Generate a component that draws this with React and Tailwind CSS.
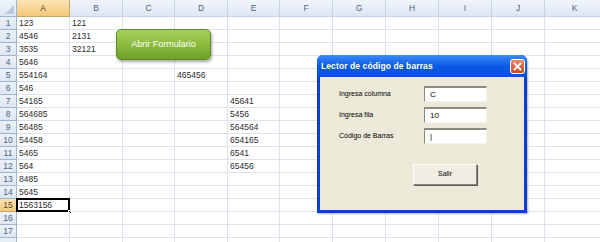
import React from "react";

const COLS = [
  ["A", 53],
  ["B", 53],
  ["C", 52],
  ["D", 53],
  ["E", 52],
  ["F", 53],
  ["G", 53],
  ["H", 53],
  ["I", 53],
  ["J", 53],
  ["K", 60],
];

const DATA = {
  1: { A: "123", B: "121" },
  2: { A: "4546", B: "2131" },
  3: { A: "3535", B: "32121" },
  4: { A: "5646" },
  5: { A: "554164", D: "465456" },
  6: { A: "546" },
  7: { A: "54165", E: "45641" },
  8: { A: "564685", E: "5456" },
  9: { A: "56485", E: "564564" },
  10: { A: "54458", E: "654165" },
  11: { A: "5465", E: "6541" },
  12: { A: "564", E: "65456" },
  13: { A: "8485" },
  14: { A: "5645" },
  15: { A: "1563156" },
  16: {},
  17: {},
  18: {},
};

function HeaderRow() {
  return (
    <div className="flex h-[17px] shrink-0">
      <div className="w-[17px] shrink-0 h-full border-r border-b border-[#9eb6ce] bg-gradient-to-b from-[#eef3fa] to-[#dde7f4] relative">
        <div className="absolute right-[2px] bottom-[2px] w-0 h-0 border-l-[9px] border-l-transparent border-b-[9px] border-b-[#b6c8dd]" />
      </div>
      {COLS.map(([c, w]) => (
        <div
          key={c}
          style={{ width: w }}
          className={
            "shrink-0 h-full flex items-center justify-center text-[8.5px] border-r border-b " +
            (c === "A"
              ? "bg-gradient-to-b from-[#fbe3b4] to-[#f5c778] border-[#c4a86b] text-[#5b4a2a]"
              : "bg-gradient-to-b from-[#f1f5fb] to-[#dce6f4] border-[#c5d3e4] text-[#4f6480]")
          }
        >
          {c}
        </div>
      ))}
    </div>
  );
}

function Row({ n }) {
  const d = DATA[n] || {};
  const sel = n === 15;
  return (
    <div className="flex h-[13px] shrink-0">
      <div
        className={
          "w-[17px] shrink-0 h-full flex items-center justify-center text-[8.5px] border-r border-b " +
          (sel
            ? "bg-gradient-to-b from-[#fbe3b4] to-[#f5c778] border-[#c4a86b] text-[#5b4a2a]"
            : "bg-gradient-to-b from-[#ecf1f8] to-[#dde7f4] border-[#9eb6ce] text-[#4f6480]")
        }
      >
        {n <= 17 ? n : ""}
      </div>
      {COLS.map(([c, w]) => (
        <div
          key={c}
          style={{ width: w }}
          className="shrink-0 h-full border-r border-b border-[#dde3ec] text-[8.5px] leading-[12px] pl-[2px] text-[#2b2b2b] relative"
        >
          {d[c] || ""}
          {sel && c === "A" && (
            <>
              <div className="absolute left-[-1px] top-[-1px] right-[-1px] bottom-[-1px] border-2 border-black" />
              <div className="absolute right-[-3px] bottom-[-3px] w-[4px] h-[4px] bg-black border border-white" />
            </>
          )}
        </div>
      ))}
    </div>
  );
}

function TextBox({ value }) {
  return (
    <div className="w-[63px] h-[16px] bg-white border-t-2 border-l border-[#8a8a80] border-r border-r-[#f4f3ee] border-b border-b-[#f4f3ee] text-[8px] leading-[13px] pl-[5px] text-black">
      {value}
    </div>
  );
}

export default function App() {
  const rows = Array.from({ length: 18 }, (_, i) => i + 1);
  return (
    <div
      className="w-[600px] h-[242px] relative overflow-hidden bg-white"
      style={{ fontFamily: '"Liberation Sans", Arial, sans-serif' }}
    >
      <div className="flex flex-col">
        <HeaderRow />
        {rows.map((n) => (
          <Row key={n} n={n} />
        ))}
      </div>

      {/* Abrir Formulario button */}
      <div className="absolute left-[116px] top-[29px] w-[95px] h-[31px] rounded-[5px] border border-[#5f8b26] bg-gradient-to-b from-[#a6d05a] via-[#8cbc3e] to-[#6f9f2a] shadow-[1px_2px_3px_rgba(0,0,0,0.35)] flex items-center justify-center text-white text-[9px]">
        Abrir Formulario
      </div>

      {/* Dialog */}
      <div className="absolute left-[317px] top-[55px] w-[210px] h-[158px] flex flex-col rounded-t-[6px] bg-[#0a3fd0] shadow-[1px_1px_2px_rgba(0,0,0,0.3)]">
        <div className="h-[22px] shrink-0 rounded-t-[6px] bg-gradient-to-b from-[#3d8bf5] via-[#0a5ae6] to-[#0a4fd8] flex items-center justify-between pl-[4px] pr-[2px]">
          <span className="text-white font-bold text-[8.5px] tracking-[0.1px]">
            Lector de código de barras
          </span>
          <div className="w-[15px] h-[15px] rounded-[3px] border border-white bg-gradient-to-b from-[#e9876a] to-[#c5451e] flex items-center justify-center">
            <svg width="9" height="9" viewBox="0 0 9 9">
              <path d="M1.5 1.5 L7.5 7.5 M7.5 1.5 L1.5 7.5" stroke="white" strokeWidth="1.8" strokeLinecap="square" />
            </svg>
          </div>
        </div>
        <div className="flex-1 mx-[3px] mb-[3px] bg-[#ece9d8] flex flex-col pt-[9px]">
          <div className="flex flex-col gap-[5px]">
            {[
              ["Ingresa columna", "C"],
              ["Ingresa fila", "10"],
              ["Código de Barras", "|"],
            ].map(([l, v]) => (
              <div key={l} className="flex items-center h-[16px]">
                <span className="w-[104px] pl-[19px] text-[7px] text-black shrink-0">{l}</span>
                <TextBox value={v} />
              </div>
            ))}
          </div>
          <div className="mt-[20px] ml-[93px] w-[64px] h-[21px] bg-[#f0eee4] border border-t-white border-l-white border-r-[#8c8a80] border-b-[#8c8a80] shadow-[1px_1px_0_#5a5a55] flex items-center justify-center text-[7px] text-black">
            Salir
          </div>
        </div>
      </div>
    </div>
  );
}
